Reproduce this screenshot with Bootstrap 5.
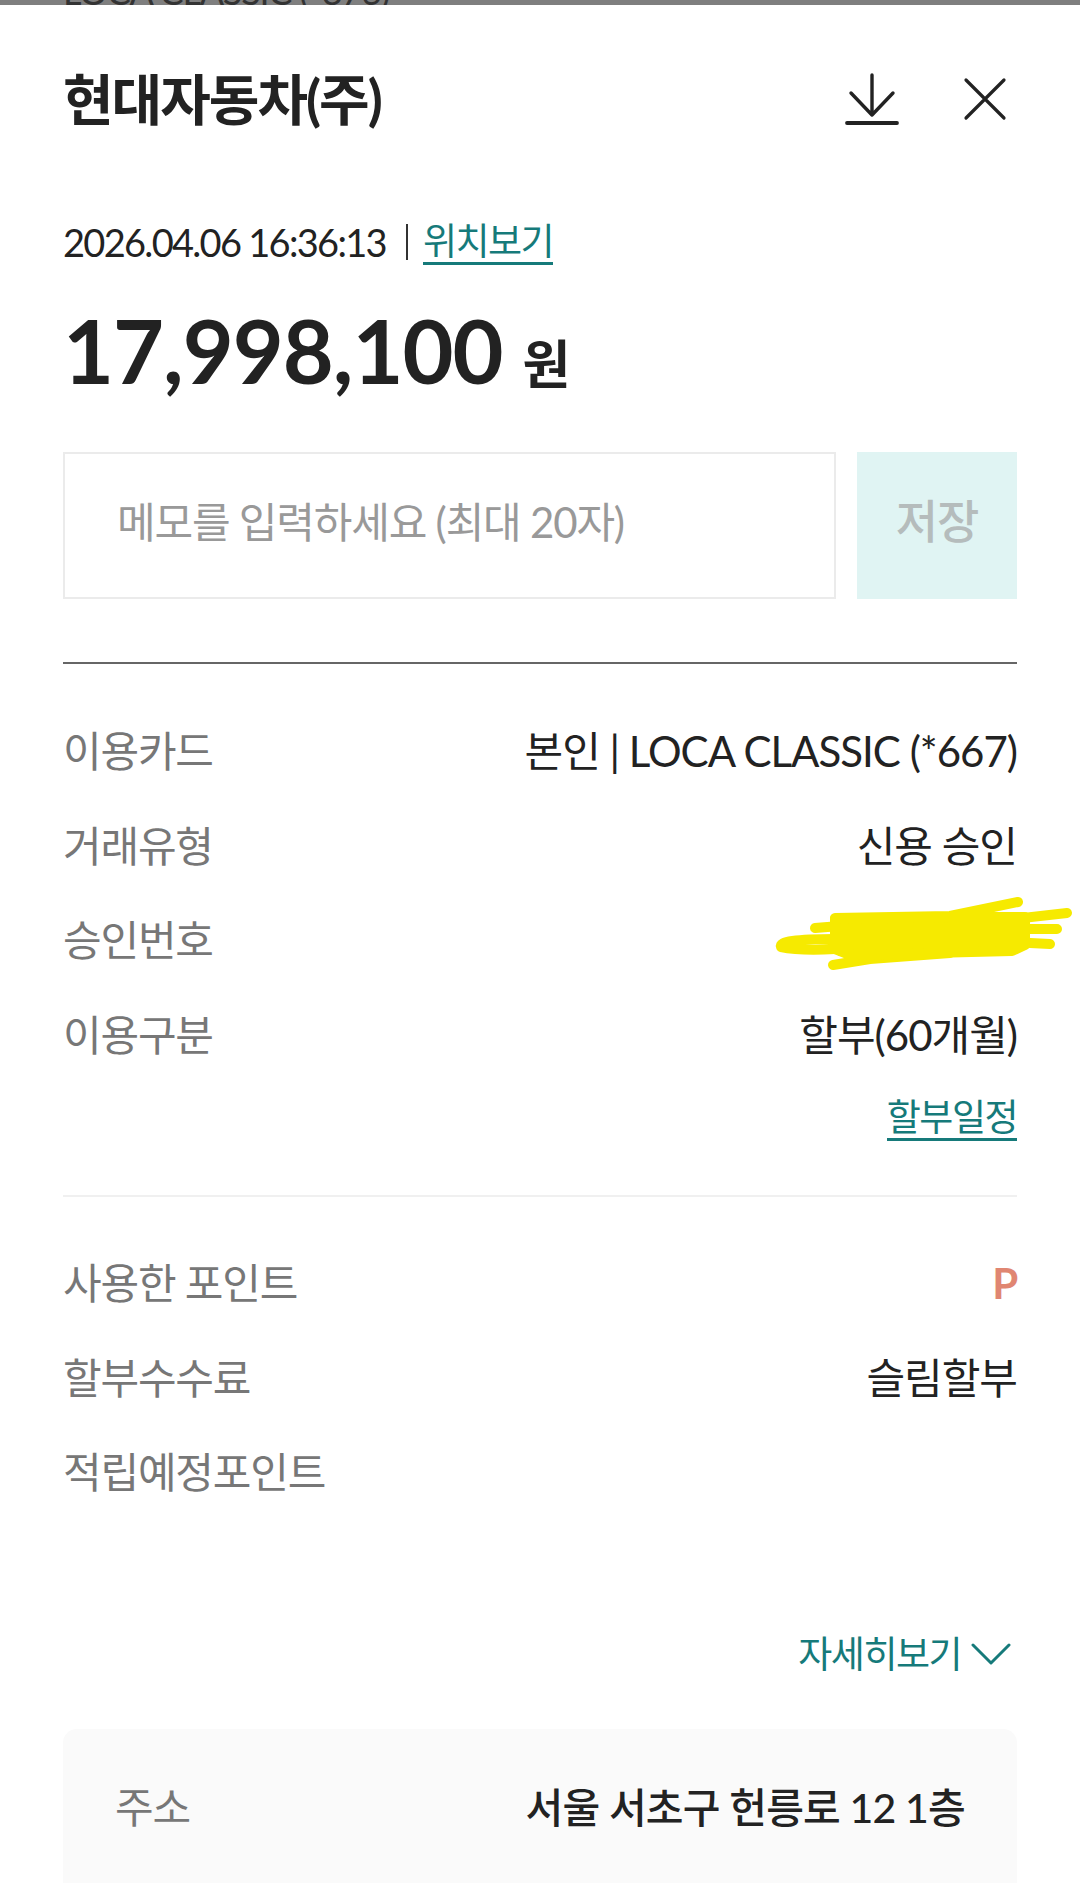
<!DOCTYPE html>
<html lang="ko">
<head>
<meta charset="utf-8"/>
<meta content="width=device-width, initial-scale=1.0" name="viewport"/>
<title>이용내역 상세</title>
<link href="https://cdn.jsdelivr.net/npm/bootstrap@5.3.0/dist/css/bootstrap.min.css" rel="stylesheet"/>
<style>
  body {
    width: 1080px;
    height: 1883px;
    overflow: hidden;
    background: #fff;
    color: #222;
    font-family: Lato, "Noto Sans CJK KR", sans-serif;
    font-size: 42px;
    letter-spacing: -1.2px;
  }
  .top-strip { height: 5px; background: #7f7f7f; overflow: hidden; }
  .top-strip span { display: block; margin: -34px 0 0 63px; font-size: 36px; line-height: 50px; color: #333; }
  .sheet { padding: 0 63px; }
  .title-bar { height: 121px; margin-top: 33px; }
  .title-text { font-size: 55px; font-weight: 700; letter-spacing: -2px; line-height: 60px; margin: 0; }
  .head-icons { gap: 64px; margin-right: 10px; }
  .date-line { margin-top: 60px; height: 46px; font-size: 38px; letter-spacing: -1.7px; line-height: 46px; }
  .sep-bar { width: 2px; height: 36px; background: #333; margin: 0 15px 0 20px; }
  .teal-link { color: #167a7a; font-size: 37px; text-decoration: none; border-bottom: 3px solid #167a7a; line-height: 42px; display: inline-block; letter-spacing: -1.5px; }
  .amount-line { margin-top: 40px; height: 90px; line-height: 90px; }
  .amount-num { font-size: 88px; font-weight: 700; letter-spacing: -1px; }
  .amount-unit { font-size: 52px; font-weight: 700; margin-left: 20px; }
  .memo-wrap { margin-top: 57px; gap: 21px; height: 147px; }
  .memo-field { border: 2px solid #ebebeb; border-radius: 0; height: 147px; padding: 0 52px 8px; font-size: 42px; letter-spacing: -1.2px; color: #222; }
  .memo-field::placeholder { color: #999; opacity: 1; }
  .memo-save {
    --bs-btn-disabled-bg: #e0f4f3;
    --bs-btn-disabled-color: #b5bcbc;
    --bs-btn-disabled-opacity: 1;
    --bs-btn-disabled-border-color: #e0f4f3;
    width: 160px;
    flex: none;
    border: 0;
    border-radius: 0;
    font-size: 46px;
    font-weight: 500;
    padding: 0 0 10px;
    letter-spacing: -1px;
  }
  .main-rule { margin: 63px 0 0; height: 2px; background: #666; opacity: 1; border: 0; }
  .info-rows { margin-top: 41px; }
  .info-row { height: 94.5px; line-height: 93px; white-space: nowrap; position: relative; }
  .info-label { color: #777; }
  .info-value { letter-spacing: -1px; }
  .info-sub { height: 70px; line-height: 68px; margin-top: -2px; }
  .thin-rule { margin: 44px 0 40px; height: 2px; background: #f0f0f0; opacity: 1; border: 0; }
  .point-val { color: #e08672; font-weight: 700; }
  .scribble { position: absolute; left: 637px; top: -33px; width: 380px; height: 110px; }
  .more-line { margin-top: 103px; height: 60px; line-height: 58px; color: #167a7a; font-size: 37px; letter-spacing: -1.5px; gap: 10px; margin-right: 6px; }
  .addr-box { margin-top: 45px; height: 300px; background: #fafafa; border-radius: 14px; padding: 32px 52px; }
  .addr-box .info-row { height: 94px; }
  .addr-val { font-weight: 500; font-size: 41px; letter-spacing: -0.8px; }
</style>
</head>
<body>
<div class="top-strip"><span>LOCA CLASSIC (*876)</span></div>
<div class="sheet">
  <div class="title-bar d-flex justify-content-between align-items-center">
    <h1 class="title-text">현대자동차(주)</h1>
    <div class="head-icons d-flex align-items-center">
      <svg width="54" height="52" viewBox="0 0 54 52" fill="none" stroke="#222" stroke-linecap="round" stroke-linejoin="round" stroke-width="3.4">
        <path d="M27 2V42M6 20L27 42L48 20"/>
        <path d="M2 50H52" stroke-width="3.8"/>
      </svg>
      <svg width="44" height="44" viewBox="0 0 44 44" fill="none" stroke="#222" stroke-linecap="round" stroke-width="3.2">
        <path d="M3 3L41 41M41 3L3 41"/>
      </svg>
    </div>
  </div>
  <div class="date-line d-flex align-items-center">
    <span>2026.04.06 16:36:13</span><span class="sep-bar"></span><a class="teal-link" href="#">위치보기</a>
  </div>
  <div class="amount-line"><span class="amount-num">17,998,100</span><span class="amount-unit">원</span></div>
  <div class="memo-wrap d-flex">
    <input class="form-control memo-field" type="text" placeholder="메모를 입력하세요 (최대 20자)"/>
    <button class="btn memo-save" type="button" disabled>저장</button>
  </div>
  <hr class="main-rule"/>
  <div class="info-rows">
    <div class="info-row d-flex justify-content-between"><span class="info-label">이용카드</span><span class="info-value">본인 | LOCA CLASSIC (*667)</span></div>
    <div class="info-row d-flex justify-content-between"><span class="info-label">거래유형</span><span class="info-value">신용 승인</span></div>
    <div class="info-row d-flex justify-content-between"><span class="info-label">승인번호</span><span class="info-value">00000000</span>
      <svg class="scribble" viewBox="0 0 380 110" fill="none" stroke="#f6ea00" stroke-linecap="round" stroke-linejoin="round" stroke-width="10">
        <path d="M135 57L250 55L318 41"/>
        <path d="M250 65L367 52M330 68L357 68M330 82L350 83"/>
        <path d="M135 78Q77 78 81 86Q100 90 135 88M115 67L140 65"/>
        <path d="M133 104L170 98L250 92"/>
        <path d="M135 58L250 56L325 56V84L312 90L150 94L135 88Z" fill="#f6ea00"/>
      </svg>
    </div>
    <div class="info-row d-flex justify-content-between"><span class="info-label">이용구분</span><span class="info-value">할부(60개월)</span></div>
    <div class="info-row info-sub d-flex justify-content-end"><div><a class="teal-link" href="#">할부일정</a></div></div>
  </div>
  <hr class="thin-rule"/>
  <div class="info-rows m-0">
    <div class="info-row d-flex justify-content-between"><span class="info-label">사용한 포인트</span><span class="point-val">P</span></div>
    <div class="info-row d-flex justify-content-between"><span class="info-label">할부수수료</span><span class="info-value">슬림할부</span></div>
    <div class="info-row d-flex justify-content-between"><span class="info-label">적립예정포인트</span><span></span></div>
  </div>
  <div class="more-line d-flex justify-content-end align-items-center">
    <span>자세히보기</span>
    <svg width="40" height="22" viewBox="0 0 40 22" fill="none" stroke="#167a7a" stroke-width="3" stroke-linecap="round" stroke-linejoin="round"><path d="M2 2L20 20L38 2"/></svg>
  </div>
  <div class="addr-box">
    <div class="info-row d-flex justify-content-between"><span class="info-label">주소</span><span class="addr-val">서울 서초구 헌릉로 12 1층</span></div>
  </div>
</div>
<script src="https://cdn.jsdelivr.net/npm/bootstrap@5.3.0/dist/js/bootstrap.bundle.min.js"></script>
</body>
</html>
